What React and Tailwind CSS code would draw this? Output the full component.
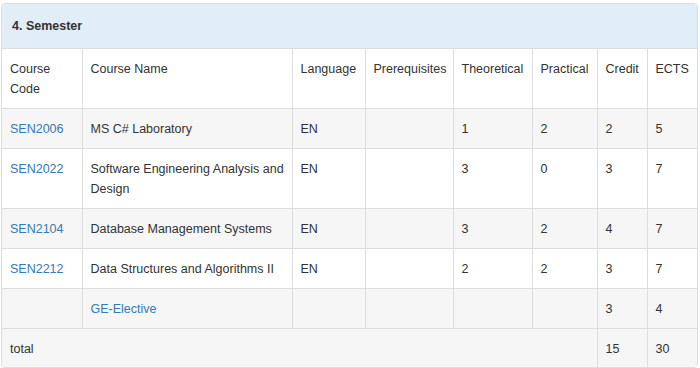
const columns = [
  { label: "Course Code", width: "w-[79px]" },
  { label: "Course Name", width: "w-[210px]" },
  { label: "Language", width: "w-[73px]" },
  { label: "Prerequisites", width: "w-[88px]" },
  { label: "Theoretical", width: "w-[79px]" },
  { label: "Practical", width: "w-[65px]" },
  { label: "Credit", width: "w-[50px]" },
  { label: "ECTS", width: "w-[50px]" },
];

const courses = [
  { code: "SEN2006", name: "MS C# Laboratory", lang: "EN", pre: "", t: "1", p: "2", credit: "2", ects: "5" },
  { code: "SEN2022", name: "Software Engineering Analysis and Design", lang: "EN", pre: "", t: "3", p: "0", credit: "3", ects: "7" },
  { code: "SEN2104", name: "Database Management Systems", lang: "EN", pre: "", t: "3", p: "2", credit: "4", ects: "7" },
  { code: "SEN2212", name: "Data Structures and Algorithms II", lang: "EN", pre: "", t: "2", p: "2", credit: "3", ects: "7" },
  { code: "", name: "GE-Elective", link: true, lang: "", pre: "", t: "", p: "", credit: "3", ects: "4" },
];

const cell = "border border-[#dddddd] pl-2 pt-[10px] pb-[9px] align-top text-left font-normal";

function App() {
  return (
    <div className="min-h-screen bg-white pl-[1px] pt-[3px] font-['Liberation_Sans',Arial,sans-serif] text-[12.5px] leading-[20px] text-[#333333]">
      <div className="w-[697px] rounded-[4px] border border-[#dddddd] overflow-hidden">
        <div className="h-[45px] bg-[#e1eef8] border-b border-[#dddddd] px-[10px] flex items-center font-bold">
          4. Semester
        </div>
        <table className="w-full table-fixed border-collapse -mb-px">
          <thead>
            <tr className="bg-white">
              {columns.map((col, i) => (
                <th key={col.label} className={`${cell} pr-2 ${col.width} ${i === 0 ? "border-l-0 w-[80px]" : ""} ${i === columns.length - 1 ? "border-r-0" : ""} border-t-0`}>
                  {col.label === "Course Code" ? (
                    <>
                      Course
                      <br />
                      Code
                    </>
                  ) : (
                    col.label
                  )}
                </th>
              ))}
            </tr>
          </thead>
          <tbody>
            {courses.map((c, idx) => (
              <tr key={c.name} className={idx % 2 === 0 ? "bg-[#f6f6f6]" : "bg-white"}>
                <td className={`${cell} pr-2 border-l-0 text-[#337ab7]`}>{c.code}</td>
                <td className={`${cell} pr-[2px] ${c.link ? "text-[#337ab7]" : ""}`}>{c.name}</td>
                <td className={`${cell} pr-2`}>{c.lang}</td>
                <td className={`${cell} pr-2`}>{c.pre}</td>
                <td className={`${cell} pr-2`}>{c.t}</td>
                <td className={`${cell} pr-2`}>{c.p}</td>
                <td className={`${cell} pr-2`}>{c.credit}</td>
                <td className={`${cell} pr-2 border-r-0`}>{c.ects}</td>
              </tr>
            ))}
            <tr className="bg-[#f6f6f6]">
              <td colSpan={6} className={`${cell} pr-2 border-l-0 border-b-0 pb-[7px]`}>total</td>
              <td className={`${cell} pr-2 border-b-0 pb-[7px]`}>15</td>
              <td className={`${cell} pr-2 border-r-0 border-b-0 pb-[7px]`}>30</td>
            </tr>
          </tbody>
        </table>
      </div>
    </div>
  );
}

export default App;
